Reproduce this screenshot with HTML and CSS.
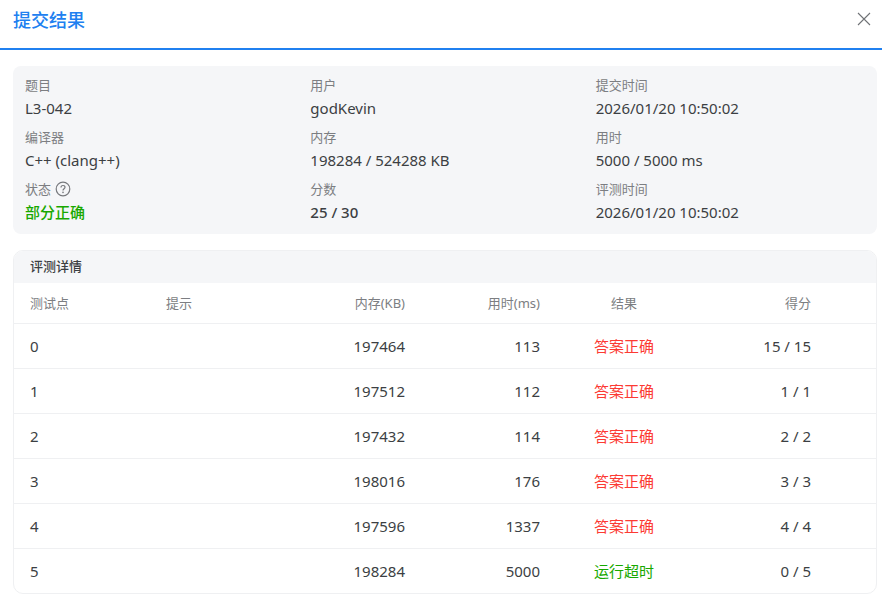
FILE: index.html
```html
<!DOCTYPE html>
<html lang="en">
<head>
    <meta charset="UTF-8">
    <meta name="viewport" content="width=device-width, initial-scale=1.0">
    <title>提交结果</title>
    <link rel="stylesheet" href="styles.css">
</head>
<body>
    <div class="head">
        <h1>提交结果</h1>
        <svg class="close" viewBox="0 0 14 14" width="14" height="14">
            <path d="M1 1L13 13M13 1L1 13" fill="none" stroke="#6f7276" stroke-width="1.1"/>
        </svg>
    </div>

    <div class="summary">
        <div class="item"><div class="label">题目</div><div class="value">L3-042</div></div>
        <div class="item"><div class="label">用户</div><div class="value">godKevin</div></div>
        <div class="item"><div class="label">提交时间</div><div class="value">2026/01/20 10:50:02</div></div>
        <div class="item"><div class="label">编译器</div><div class="value">C++ (clang++)</div></div>
        <div class="item"><div class="label">内存</div><div class="value">198284 / 524288 KB</div></div>
        <div class="item"><div class="label">用时</div><div class="value">5000 / 5000 ms</div></div>
        <div class="item">
            <div class="label">状态
                <svg class="help" viewBox="0 0 16 16" width="16" height="16">
                    <circle cx="8" cy="8" r="6.8" fill="none" stroke="#77797d" stroke-width="1.2"/>
                    <path d="M6 6.4C6 5.2 6.9 4.5 8 4.5C9.1 4.5 10 5.2 10 6.3C10 7.8 8 7.8 8 9.6" fill="none" stroke="#77797d" stroke-width="1.2"/>
                    <circle cx="8" cy="11.4" r="0.8" fill="#77797d"/>
                </svg>
            </div>
            <div class="value green strong">部分正确</div>
        </div>
        <div class="item"><div class="label">分数</div><div class="value strong">25 / 30</div></div>
        <div class="item"><div class="label">评测时间</div><div class="value">2026/01/20 10:50:02</div></div>
    </div>

    <div class="detail">
        <div class="detail-title">评测详情</div>
        <table>
            <colgroup>
                <col class="c-wide">
                <col class="c-wide">
                <col class="c-num">
                <col class="c-num">
                <col class="c-wide">
                <col class="c-num">
                <col>
            </colgroup>
            <thead>
                <tr>
                    <th>测试点</th>
                    <th>提示</th>
                    <th class="right">内存(KB)</th>
                    <th class="right">用时(ms)</th>
                    <th class="center">结果</th>
                    <th class="right">得分</th>
                    <th></th>
                </tr>
            </thead>
            <tbody>
                <tr><td>0</td><td></td><td class="right">197464</td><td class="right">113</td><td class="center red">答案正确</td><td class="right">15 / 15</td><td></td></tr>
                <tr><td>1</td><td></td><td class="right">197512</td><td class="right">112</td><td class="center red">答案正确</td><td class="right">1 / 1</td><td></td></tr>
                <tr><td>2</td><td></td><td class="right">197432</td><td class="right">114</td><td class="center red">答案正确</td><td class="right">2 / 2</td><td></td></tr>
                <tr><td>3</td><td></td><td class="right">198016</td><td class="right">176</td><td class="center red">答案正确</td><td class="right">3 / 3</td><td></td></tr>
                <tr><td>4</td><td></td><td class="right">197596</td><td class="right">1337</td><td class="center red">答案正确</td><td class="right">4 / 4</td><td></td></tr>
                <tr><td>5</td><td></td><td class="right">198284</td><td class="right">5000</td><td class="center green">运行超时</td><td class="right">0 / 5</td><td></td></tr>
            </tbody>
        </table>
    </div>
</body>
</html>
```

FILE: styles.css
```css
* {
    margin:0;
    padding:0;
    box-sizing: border-box;
}
body {
    background: #fff;
    color: #3c3f43;
    font-family: "Noto Sans", "Noto Sans CJK SC", sans-serif;
    font-size: 15px;
    overflow: hidden;
}
.head {
    height: 50px;
    padding: 0 11px 10px 13px;
    border-bottom: 2px solid #2080f0;
    display: flex;
    justify-content: space-between;
    align-items: center;
}
.head h1 {
    font-size: 18px;
    font-weight: 500;
    color: #2080f0;
}
.summary {
    margin: 16px 5px 16px 13px;
    padding: 9px 12px;
    height: 168px;
    background: #f5f6f8;
    border-radius: 8px;
    display: grid;
    grid-template-columns: repeat(3, 1fr);
    align-content: start;
    column-gap: 16px;
    row-gap: 8px;
}
.label {
    font-size: 13px;
    line-height: 20px;
    color: #7c7e82;
    display: flex;
    align-items: center;
    gap: 4px;
}
.value {
    margin-top: 2px;
    line-height: 22px;
}
.strong {
    font-weight: 500;
}
.green {
    color: #18a800;
}
.red {
    color: #fc3a33;
}
.detail {
    margin: 0 5px 0 13px;
    height: 344px;
    border: 1px solid #eff0f2;
    border-radius: 10px;
    overflow: hidden;
}
.detail-title {
    height: 32px;
    padding-left: 16px;
    background: #f5f6f8;
    font-size: 13px;
    font-weight: 500;
    line-height: 31px;
}
table {
    width: 100%;
    table-layout: fixed;
    border-collapse: collapse;
}
.c-wide { width: 136px; }
.c-num { width: 135px; }
th, td {
    padding: 0 16px;
    text-align: left;
}
th {
    height: 40px;
    font-size: 13px;
    font-weight: 400;
    color: #7c7e82;
    border-bottom: 1px solid #eff0f2;
}
td {
    height: 45px;
    border-bottom: 1px solid #eff0f2;
}
tbody tr:last-child td {
    border-bottom: 0;
}
.right {
    text-align: right;
}
.center {
    text-align: center;
}
```
